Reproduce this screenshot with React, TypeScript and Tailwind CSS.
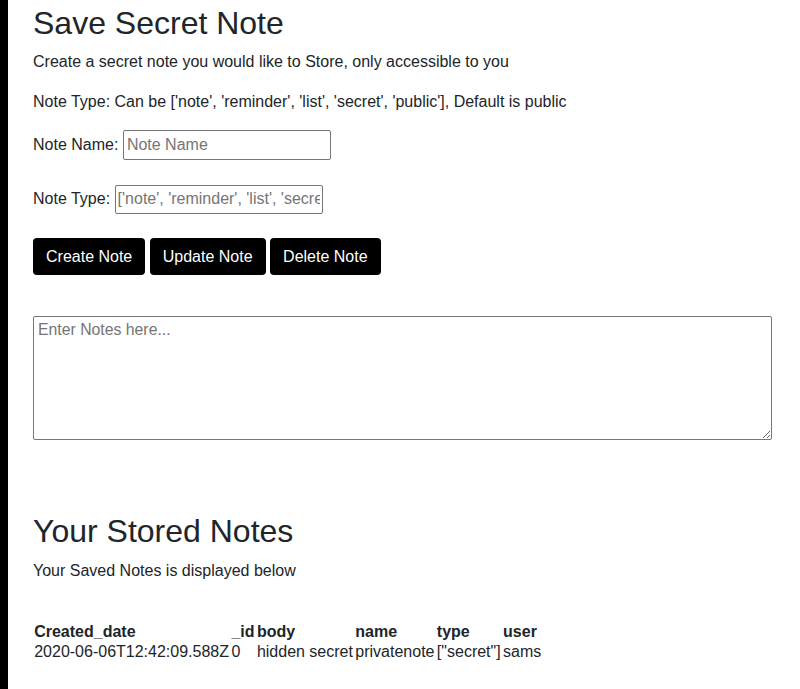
import React from "react";

export default function App() {
  return (
    <div
      className="min-h-[689px] border-l-8 border-black bg-white pl-[25px] pr-[28px] pt-[4px] text-[16px] leading-[1.5] text-[#212529]"
      style={{ fontFamily: '"Liberation Sans", Arial, sans-serif' }}
    >
      <h2 className="mb-2 text-[32px] leading-[1.2] font-normal">Save Secret Note</h2>
      <p className="mb-4">Create a secret note you would like to Store, only accessible to you</p>
      <p className="mb-[15.6px]">
        Note Type: Can be ['note', 'reminder', 'list', 'secret', 'public'], Default is public
      </p>

      <div className="flex items-center gap-[4.5px]">
        <span>Note Name:</span>
        <input
          type="text"
          placeholder="Note Name"
          className="h-[30px] w-[208px] rounded-[2px] border border-[#767676] px-[3px] text-[16px] placeholder:text-[#757575] outline-none"
        />
      </div>

      <div className="mt-[25px] flex items-center gap-[4.5px]">
        <span>Note Type:</span>
        <input
          type="text"
          placeholder="['note', 'reminder', 'list', 'secret', 'public']"
          className="h-[29px] w-[208px] rounded-[2px] border border-[#767676] px-[2px] text-[16px] placeholder:text-[#757575] outline-none"
        />
      </div>

      <div className="mt-[24px] flex gap-[4.5px]">
        <button className="h-[37px] rounded-[4px] bg-black px-[13px] pt-[1px] text-white">Create Note</button>
        <button className="h-[37px] rounded-[4px] bg-black px-[13px] pt-[1px] text-white">Update Note</button>
        <button className="h-[37px] rounded-[4px] bg-black px-[13px] pt-[1px] text-white">Delete Note</button>
      </div>

      <textarea
        placeholder="Enter Notes here..."
        className="mt-[41px] block h-[124px] w-[739px] rounded-[2px] border border-[#767676] pl-[4px] pr-[2px] pt-[4px] text-[15.8px] leading-[1.2] placeholder:text-[#757575] outline-none"
        style={{ fontFamily: '"Liberation Sans Narrow", "Liberation Sans", Arial, sans-serif' }}
      />

      <h2 className="mt-[72px] mb-[9px] text-[32px] leading-[1.2] font-normal">Your Stored Notes</h2>
      <p className="mb-4">Your Saved Notes is displayed below</p>

      <table className="mt-[39px] border-collapse leading-[18px]">
        <thead>
          <tr>
            <th className="py-[1px] px-[1.2px] text-left font-bold">Created_date</th>
            <th className="py-[1px] px-[1.2px] text-left font-bold">_id</th>
            <th className="py-[1px] px-[1.2px] text-left font-bold">body</th>
            <th className="py-[1px] px-[1.2px] text-left font-bold">name</th>
            <th className="py-[1px] px-[1.2px] text-left font-bold">type</th>
            <th className="py-[1px] px-[1.2px] text-left font-bold">user</th>
          </tr>
        </thead>
        <tbody>
          <tr>
            <td className="py-[1px] px-[1.2px]">2020-06-06T12:42:09.588Z</td>
            <td className="py-[1px] px-[1.2px]">0</td>
            <td className="py-[1px] px-[1.2px]">hidden secret</td>
            <td className="py-[1px] px-[1.2px]">privatenote</td>
            <td className="py-[1px] px-[1.2px]">["secret"]</td>
            <td className="py-[1px] px-[1.2px]">sams</td>
          </tr>
        </tbody>
      </table>
    </div>
  );
}
